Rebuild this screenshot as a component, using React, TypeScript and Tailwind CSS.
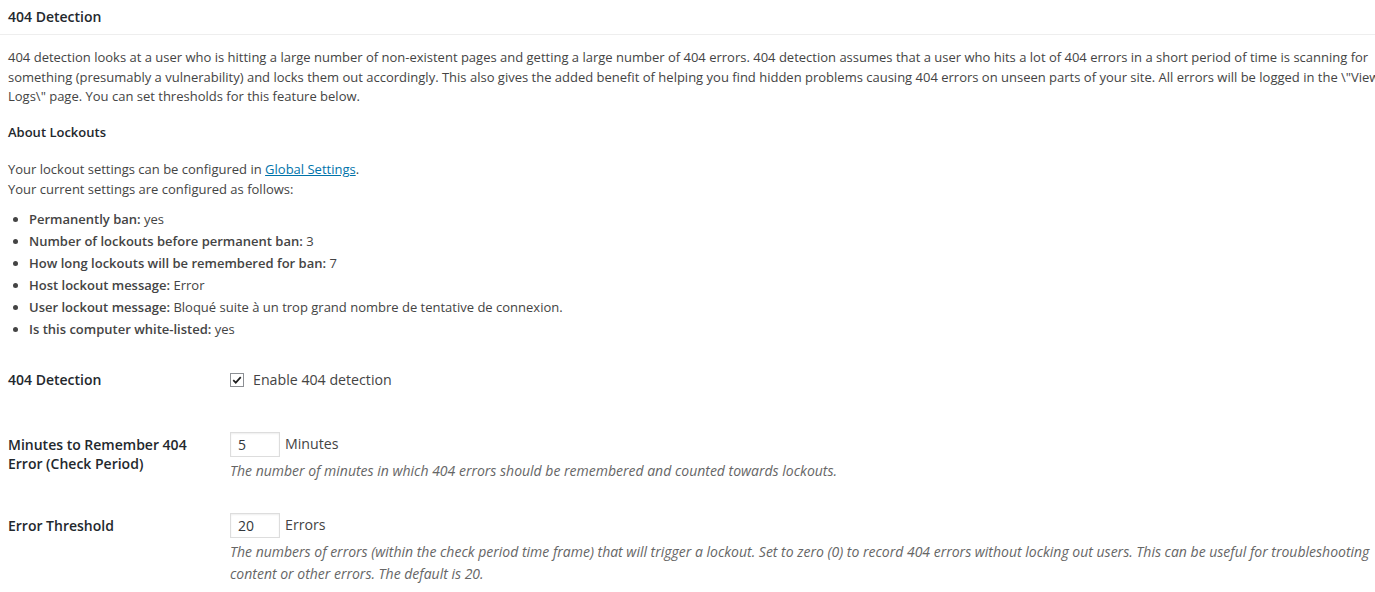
const SETTINGS = [
  { label: 'Permanently ban:', value: 'yes' },
  { label: 'Number of lockouts before permanent ban:', value: '3' },
  { label: 'How long lockouts will be remembered for ban:', value: '7' },
  { label: 'Host lockout message:', value: 'Error' },
  { label: 'User lockout message:', value: 'Bloqué suite à un trop grand nombre de tentative de connexion.' },
  { label: 'Is this computer white-listed:', value: 'yes' },
]

function NumberBox({ value }: { value: string }) {
  return (
    <div className="h-[25px] w-[50px] border border-[#ddd] shadow-[inset_0_1px_2px_rgba(0,0,0,0.07)] bg-white pl-[7px] text-[14px] leading-[23px] text-[#32373c]">
      {value}
    </div>
  )
}

export default function App() {
  return (
    <div className="w-full min-h-[592px] bg-white overflow-hidden font-['Open_Sans',sans-serif] text-[#444]">
      <div className="w-[1410px]">
        {/* postbox header */}
        <div className="h-[35px] border-b border-[#eee] px-[8px] pt-[7px]">
          <h3 className="text-[14px] leading-[19px] font-semibold text-[#23282d]">404 Detection</h3>
        </div>

        <div className="px-[8px]">
          <p className="mt-[13px] text-[13px] leading-[19.5px]">
            404 detection looks at a user who is hitting a large number of non-existent pages and getting a large number of 404 errors. 404 detection assumes that a user who hits a lot of 404 errors in a short period of time is scanning for something (presumably a vulnerability) and locks them out accordingly. This also gives the added benefit of helping you find hidden problems causing 404 errors on unseen parts of your site. All errors will be logged in the \"View Logs\" page. You can set thresholds for this feature below.
          </p>

          <h4 className="mt-[16.5px] text-[13px] leading-[19.5px] font-semibold text-[#23282d]">About Lockouts</h4>

          <p className="mt-[16px] text-[13px] leading-[20px]">
            Your lockout settings can be configured in{' '}
            <a href="#" className="text-[#0073aa] underline">Global Settings</a>.
            <br />
            Your current settings are configured as follows:
          </p>

          <ul className="mt-[9px] list-disc pl-[21px] text-[13px] leading-[22px]">
            {SETTINGS.map((s) => (
              <li key={s.label}>
                <strong className="font-semibold">{s.label}</strong> {s.value}
              </li>
            ))}
          </ul>

          {/* form table */}
          <div className="mt-[29px] flex">
            <div className="w-[222px] shrink-0 pt-[1px] text-[14px] leading-[19px] font-semibold text-[#23282d]">
              404 Detection
            </div>
            <label className="flex items-center h-[22px] gap-[9px] text-[14.2px] font-medium text-[#444]">
              <span className="flex h-[14px] w-[14px] items-center justify-center border border-[#8c8f94] bg-white">
                <svg viewBox="0 0 12 12" className="h-[10px] w-[10px]">
                  <path d="M1.5 6.2 L4.5 9.2 L10.5 2.5" fill="none" stroke="#1e1e1e" strokeWidth="2" />
                </svg>
              </span>
              Enable 404 detection
            </label>
          </div>

          <div className="mt-[41px] flex">
            <div className="w-[222px] shrink-0 pt-[3px] pr-[10px] text-[14px] leading-[19px] font-semibold text-[#23282d]">
              Minutes to Remember 404 Error (Check Period)
            </div>
            <div className="flex-1 pr-[10px]">
              <div className="flex items-center gap-[5px] text-[14.2px] font-medium">
                <NumberBox value="5" />
                <span>Minutes</span>
              </div>
              <p className="mt-[3px] text-[14px] leading-[22px] italic text-[#666]">
                The number of minutes in which 404 errors should be remembered and counted towards lockouts.
              </p>
            </div>
          </div>

          <div className="mt-[31px] flex">
            <div className="w-[222px] shrink-0 pt-[3px] text-[14px] leading-[19px] font-semibold text-[#23282d]">
              Error Threshold
            </div>
            <div className="flex-1 pr-[10px]">
              <div className="flex items-center gap-[5px] text-[14.2px] font-medium">
                <NumberBox value="20" />
                <span>Errors</span>
              </div>
              <p className="mt-[3px] text-[14px] leading-[22px] italic text-[#666]">
                The numbers of errors (within the check period time frame) that will trigger a lockout. Set to zero (0) to record 404 errors without locking out users. This can be useful for troubleshooting content or other errors. The default is 20.
              </p>
            </div>
          </div>
        </div>
      </div>
    </div>
  )
}
